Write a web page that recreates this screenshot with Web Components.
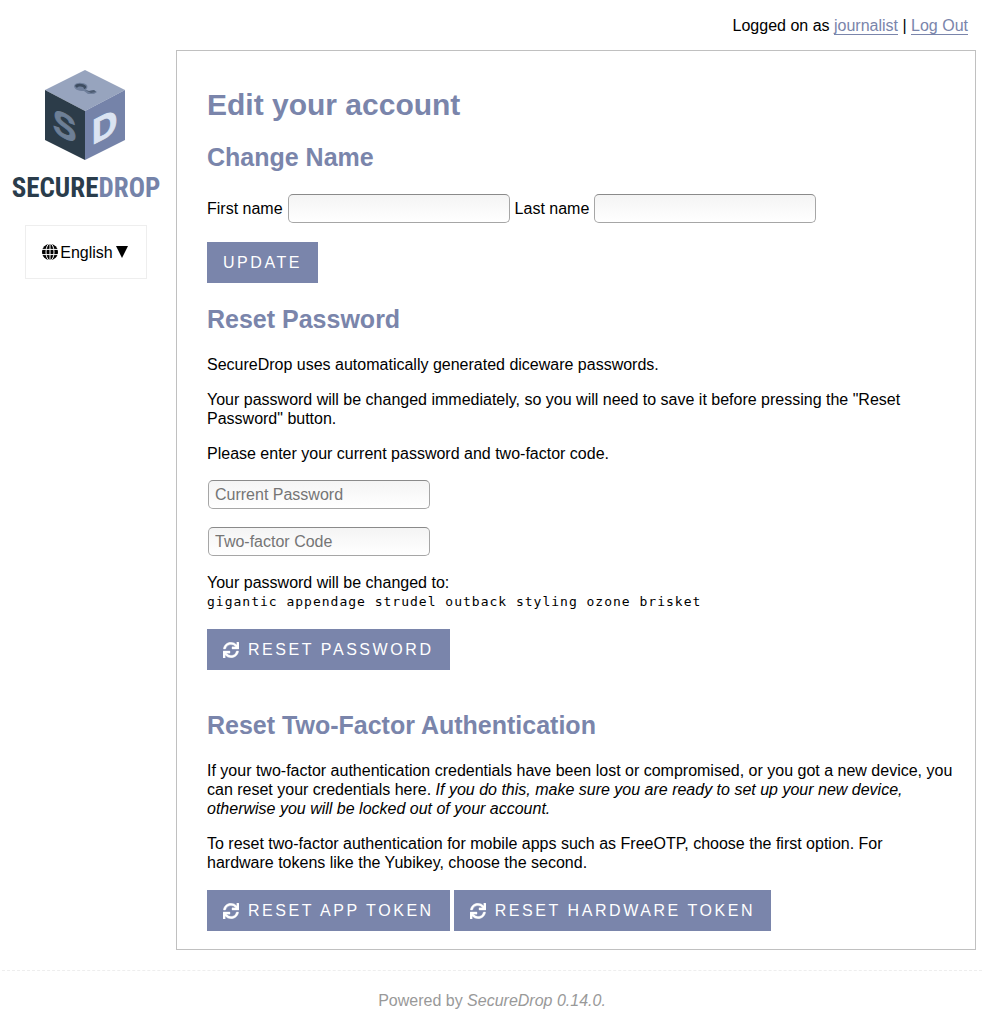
<!DOCTYPE html>
<html lang="en">
<head>
<meta charset="utf-8">
<title>SecureDrop</title>
<style>
:root { --accent: #7a85ab; --rule: #c0c0c0; }
body { margin: 0; background: #fff; color: #000; font: 16px/19px "Liberation Sans", Arial, sans-serif; }
</style>
</head>
<body>
<sd-page>
  <sd-user-bar slot="top" user="journalist"></sd-user-bar>
  <sd-logo slot="side"></sd-logo>
  <sd-language slot="side">English</sd-language>
  <sd-account slot="main"></sd-account>
  <sd-footer slot="footer" version="0.14.0"></sd-footer>
</sd-page>
<script>
function define(name, html, setup) {
  customElements.define(name, class extends HTMLElement {
    constructor() {
      super();
      this.attachShadow({ mode: "open" }).innerHTML = html;
    }
    connectedCallback() { if (setup) setup(this, this.shadowRoot); }
  });
}

define("sd-page", `
<style>
:host { display: block; }
.columns { display: grid; grid-template-columns: 152px minmax(0, 1fr); column-gap: 14px; padding: 0 8px 0 10px; }
aside { display: flex; flex-direction: column; align-items: center; padding-top: 20px; gap: 10px; }
</style>
<slot name="top"></slot>
<div class="columns">
  <aside><slot name="side"></slot></aside>
  <main><slot name="main"></slot></main>
</div>
<slot name="footer"></slot>`);

define("sd-user-bar", `
<style>
:host { display: block; padding: 16px 16px 15px; text-align: right; }
a { color: var(--accent); text-decoration: none; border-bottom: 1px solid var(--accent); }
</style>
<nav>Logged on as <a class="user" href="#account"></a> | <a href="#logout">Log Out</a></nav>`,
(host, root) => { root.querySelector(".user").textContent = host.getAttribute("user"); });

define("sd-logo", `
<style>
:host { display: block; width: 150px; text-align: center; }
a { display: block; color: #2a3c4b; text-decoration: none; }
svg { display: block; margin: 0 auto; }
.word { font: bold 27px/53px "Liberation Sans Narrow", "Roboto Condensed", "Liberation Sans", sans-serif; white-space: nowrap; }
.word span { color: #7583a9; }
.face { font: bold 35px "Liberation Sans", sans-serif; stroke-width: 1; }
</style>
<a href="#home">
<svg width="84" height="92" viewBox="0 0 84 92" aria-hidden="true">
  <path d="M41 0L81 20L41 41L1 20Z" fill="#97a4be"/>
  <path d="M1 20L41 41V90L1 70Z" fill="#2c3c49"/>
  <path d="M81 20L41 41V90L81 70Z" fill="#7583a9"/>
  <path d="M30 16C31 12 39 12 43 15C44 17 43 19 42 20L45 21L50 20L53 22L50 24L44 24L40 21C34 21 30 19 30 16Z" fill="#6f7f9b"/>
  <path d="M31 16C32 13 39 13 42 16C43 18 41 19 40 19C40 16 34 16 33 18Z" fill="#3e4d61"/>
  <path d="M41 20L45 21L50 20L52 22L47 23Z" fill="#4d5c72"/>
  <text class="face" transform="translate(9 62) skewY(27)" fill="#6d7f96" stroke="#6d7f96">S</text>
  <text class="face" transform="translate(48 75) skewY(-27)" fill="#dbe4f2" stroke="#dbe4f2">D</text>
</svg>
<div class="word">SECURE<span>DROP</span></div>
</a>`);

define("sd-language", `
<style>
:host { display: block; }
button { display: flex; align-items: center; gap: 2px; height: 54px; padding: 0 17px 0 16px; background: #fff; border: 1px solid #eee; font: inherit; color: #000; cursor: pointer; }
svg { display: block; }
</style>
<button type="button" aria-haspopup="true">
<svg width="16" height="16" viewBox="0 0 16 16" aria-hidden="true"><circle cx="8" cy="8" r="8"/><g fill="none" stroke="#fff"><path d="M0 5.4H16M0 10.6H16M8 0V16"/><ellipse cx="8" cy="8" rx="4" ry="8.4"/></g></svg>
<span><slot></slot></span>
<svg width="14" height="12" viewBox="0 0 14 12" aria-hidden="true"><path d="M1 0H13L7 12Z"/></svg>
</button>`);

define("sd-field", `
<style>
:host { display: inline-block; }
:host([hide-label]) { display: block; }
.row { display: flex; align-items: center; gap: 4px; }
input { box-sizing: border-box; width: 222px; height: 29px; margin: 1px; padding: 0 6px; border: 1px solid #a6a6a6; border-top-color: #8a8a8a; border-radius: 5px; background: linear-gradient(#f4f4f4, #fff); font: inherit; color: #000; }
input::placeholder { color: #757575; opacity: 1; }
</style>
<div class="row"><label for="box"></label><input id="box"></div>`,
(host, root) => {
  const text = host.getAttribute("label");
  const label = root.querySelector("label"), box = root.querySelector("input");
  box.type = host.getAttribute("type") || "text";
  if (host.hasAttribute("hide-label")) {
    if (label) label.remove();
    box.placeholder = text;
    box.setAttribute("aria-label", text);
  } else {
    label.textContent = text;
  }
});

define("sd-button", `
<style>
:host { display: inline-block; }
button { display: flex; align-items: center; gap: 9px; height: 41px; padding: 0 16px; border: 0; background: var(--accent); color: #fff; font: inherit; letter-spacing: .16em; text-transform: uppercase; white-space: nowrap; cursor: pointer; }
svg { display: none; }
:host([refresh]) svg { display: block; }
</style>
<button type="button">
<svg width="16" height="16" viewBox="0 0 512 512" fill="#fff" stroke="#fff" stroke-width="12" aria-hidden="true"><path d="M440.65 12.57l4 82.77A247.16 247.16 0 0 0 255.83 8C134.73 8 33.91 94.92 12.29 209.82A12 12 0 0 0 24.09 224h49.05a12 12 0 0 0 11.67-9.26 175.91 175.91 0 0 1 317-56.94l-101.46-4.86a12 12 0 0 0-12.57 12v47.41a12 12 0 0 0 12 12H500a12 12 0 0 0 12-12V12a12 12 0 0 0-12-12h-47.37a12 12 0 0 0-11.98 12.57zM255.83 432a175.61 175.61 0 0 1-146-77.8l101.8 4.87a12 12 0 0 0 12.57-12v-47.4a12 12 0 0 0-12-12H12a12 12 0 0 0-12 12V500a12 12 0 0 0 12 12h47.35a12 12 0 0 0 12-12.6l-4.15-82.57A247.17 247.17 0 0 0 255.83 504c121.11 0 221.93-86.92 243.55-201.82a12 12 0 0 0-11.8-14.18h-49.05a12 12 0 0 0-11.67 9.26A175.86 175.86 0 0 1 255.83 432z"/></svg>
<span><slot></slot></span>
</button>`);

define("sd-account", `
<style>
:host { display: block; border: 1px solid var(--rule); padding: 36px 22px 18px 30px; }
h1, h2 { color: var(--accent); margin: 0; }
h1 { font-size: 30px; line-height: 36px; margin-bottom: 19px; }
h2 { font-size: 25px; line-height: 30px; margin-bottom: 21px; }
section + section { margin-top: 21px; }
section.apart { margin-top: 40px; }
p { margin: 0 0 16px; }
.names { display: flex; flex-wrap: wrap; gap: 4px; margin-bottom: 18px; }
.fields { display: flex; flex-direction: column; gap: 16px; margin-bottom: 16px; }
.actions { display: flex; flex-wrap: wrap; gap: 4px; margin-top: 18px; }
code { display: block; font: 13px/19px "DejaVu Sans Mono", monospace; letter-spacing: 1px; }
</style>
<h1>Edit your account</h1>
<section>
  <h2>Change Name</h2>
  <div class="names"><sd-field label="First name"></sd-field><sd-field label="Last name"></sd-field></div>
  <div class="actions"><sd-button>Update</sd-button></div>
</section>
<section>
  <h2>Reset Password</h2>
  <p>SecureDrop uses automatically generated diceware passwords.</p>
  <p>Your password will be changed immediately, so you will need to save it before pressing the "Reset Password" button.</p>
  <p>Please enter your current password and two-factor code.</p>
  <div class="fields"><sd-field label="Current Password" type="password" hide-label></sd-field><sd-field label="Two-factor Code" hide-label></sd-field></div>
  <div>Your password will be changed to: <code>gigantic appendage strudel outback styling ozone brisket</code></div>
  <div class="actions"><sd-button refresh>Reset Password</sd-button></div>
</section>
<section class="apart">
  <h2>Reset Two-Factor Authentication</h2>
  <p>If your two-factor authentication credentials have been lost or compromised, or you got a new device, you can reset your credentials here. <em>If you do this, make sure you are ready to set up your new device, otherwise you will be locked out of your account.</em></p>
  <p>To reset two-factor authentication for mobile apps such as FreeOTP, choose the first option. For hardware&nbsp;tokens like the Yubikey, choose the second.</p>
  <div class="actions"><sd-button refresh>Reset App Token</sd-button><sd-button refresh>Reset Hardware Token</sd-button></div>
</section>`);

define("sd-footer", `
<style>
:host { display: block; margin: 20px 2px 0; padding: 20px 0 15px; border-top: 1px dashed #eee; text-align: center; color: #999; }
</style>
<footer>Powered by <em>SecureDrop <span></span>.</em></footer>`,
(host, root) => { root.querySelector("span").textContent = host.getAttribute("version"); });
</script>
</body>
</html>
